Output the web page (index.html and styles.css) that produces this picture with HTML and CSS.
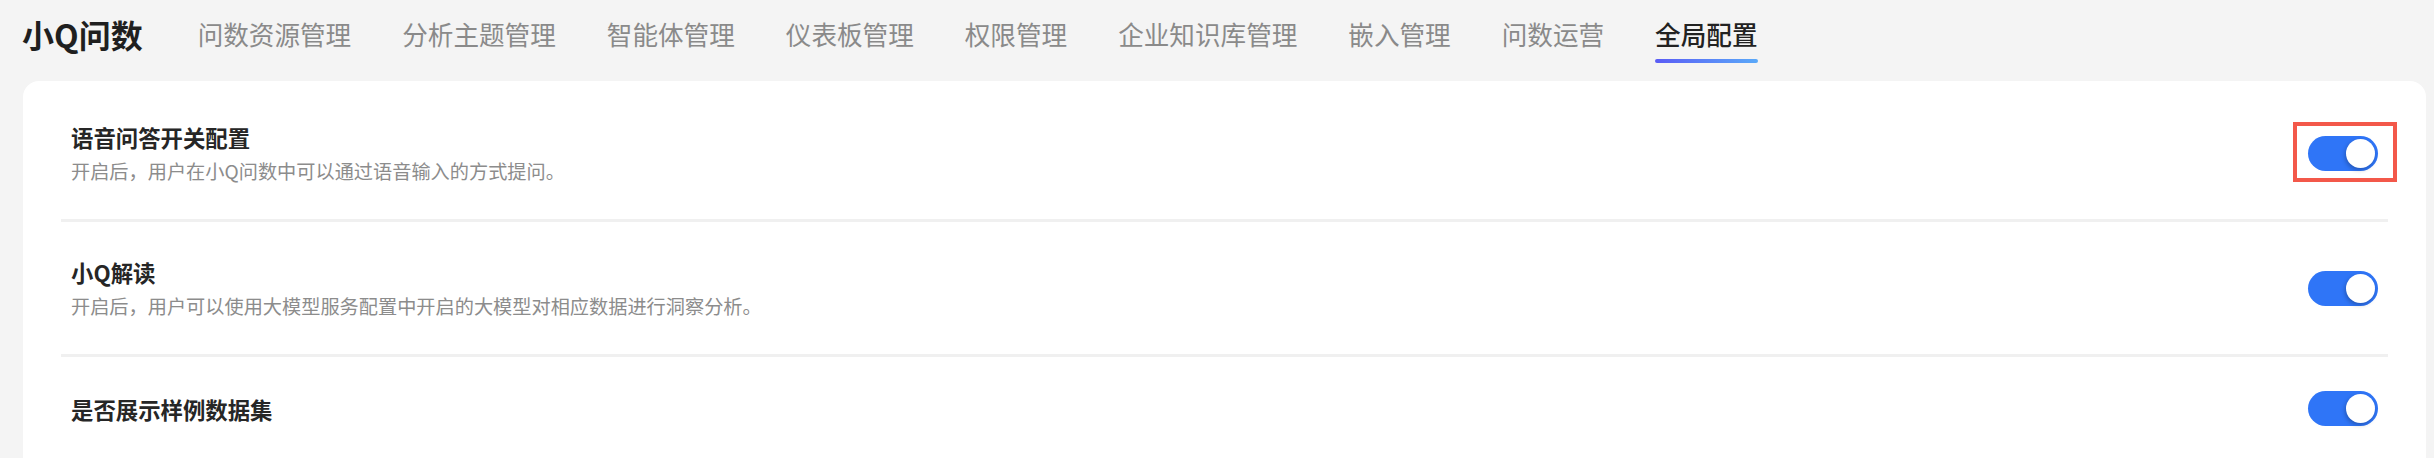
FILE: index.html
```html
<!DOCTYPE html>
<html lang="zh-CN">
<head>
<meta charset="utf-8">
<title>全局配置</title>
<link rel="stylesheet" href="styles.css">
</head>
<body>
<header class="topbar">
  <div class="brand">小Q问数</div>
  <nav class="nav">
    <span class="nav-item">问数资源管理</span>
    <span class="nav-item">分析主题管理</span>
    <span class="nav-item">智能体管理</span>
    <span class="nav-item">仪表板管理</span>
    <span class="nav-item">权限管理</span>
    <span class="nav-item">企业知识库管理</span>
    <span class="nav-item">嵌入管理</span>
    <span class="nav-item">问数运营</span>
    <span class="nav-item active">全局配置</span>
  </nav>
</header>
<main class="card">
  <div class="row">
    <div class="row-text">
      <div class="row-title">语音问答开关配置</div>
      <div class="row-desc">开启后，用户在小Q问数中可以通过语音输入的方式提问。</div>
    </div>
    <div class="switch-wrap">
      <span class="switch on"><span class="knob"></span></span>
      <span class="highlight"></span>
    </div>
  </div>
  <div class="row">
    <div class="row-text">
      <div class="row-title">小Q解读</div>
      <div class="row-desc">开启后，用户可以使用大模型服务配置中开启的大模型对相应数据进行洞察分析。</div>
    </div>
    <div class="switch-wrap">
      <span class="switch on"><span class="knob"></span></span>
    </div>
  </div>
  <div class="row">
    <div class="row-text">
      <div class="row-title">是否展示样例数据集</div>
    </div>
    <div class="switch-wrap">
      <span class="switch on"><span class="knob"></span></span>
    </div>
  </div>
</main>
</body>
</html>
```
FILE: styles.css
```css
* { box-sizing: border-box; }
html, body {
  margin: 0;
  padding: 0;
}
body {
  background: #f4f4f4;
  font-family: "Noto Sans CJK SC", "Noto Sans", sans-serif;
  color: #262626;
  width: 2434px;
  height: 458px;
  overflow: hidden;
}
.topbar {
  display: flex;
  align-items: flex-start;
  height: 81px;
  padding: 12px 0 0 22px;
}
.brand {
  font-size: 32px;
  line-height: 44px;
  font-weight: 700;
  color: #1f1f1f;
}
.nav {
  display: flex;
  gap: 51px;
  margin-left: 55px;
}
.nav-item {
  position: relative;
  font-size: 25.6px;
  line-height: 44px;
  color: #8a8a8a;
  white-space: nowrap;
}
.nav-item.active {
  color: #222222;
  font-weight: 500;
}
.nav-item.active::after {
  content: "";
  position: absolute;
  left: 0;
  right: 0;
  top: 47px;
  height: 4px;
  border-radius: 2px;
  background: linear-gradient(90deg, #5a5cf5 0%, #5aa9f9 100%);
}
.card {
  margin: 0 8px 0 23px;
  background: #ffffff;
  border-radius: 16px 16px 0 0;
  padding: 6px 38px 40px;
  min-height: 420px;
}
.row {
  display: flex;
  align-items: center;
  justify-content: space-between;
  padding: 34px 10px;
  border-bottom: 3px solid #f0f0f0;
}
.row:last-child { border-bottom: none; }
.row-title {
  font-size: 22.4px;
  line-height: 32px;
  font-weight: 600;
  color: #262626;
}
.row-desc {
  margin-top: 4px;
  font-size: 19.2px;
  line-height: 28px;
  color: #8c8c8c;
}
.switch-wrap {
  position: relative;
  display: flex;
}
.switch {
  position: relative;
  display: flex;
  align-items: center;
  justify-content: flex-end;
  width: 70px;
  height: 35px;
  border-radius: 18px;
  background: #2f75f7;
  padding: 3px;
}
.knob {
  width: 29px;
  height: 29px;
  border-radius: 50%;
  background: #ffffff;
  box-shadow: -1px 2px 4px rgba(0, 0, 0, 0.25);
}
.highlight {
  position: absolute;
  left: -15px;
  top: -14px;
  width: 104px;
  height: 60px;
  border: 4px solid #f3584a;
}
```
